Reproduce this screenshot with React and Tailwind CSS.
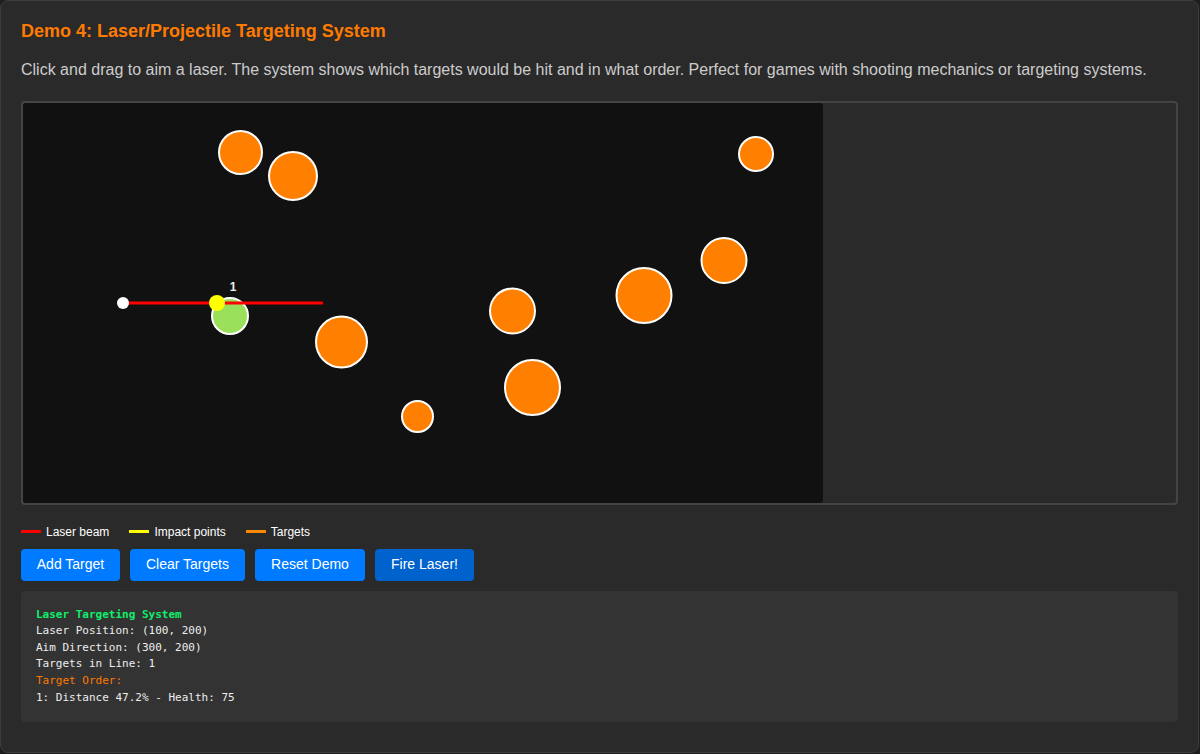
import React from 'react';

const targets = [
  { x: 217.5, y: 49.5, r: 21.5 },
  { x: 270, y: 73, r: 24 },
  { x: 733, y: 51, r: 17 },
  { x: 701, y: 157.5, r: 22.5 },
  { x: 621, y: 192.5, r: 27.5 },
  { x: 489.5, y: 208, r: 22.5 },
  { x: 318.5, y: 239, r: 25.5 },
  { x: 509.5, y: 284.5, r: 27.5 },
  { x: 394.5, y: 313.5, r: 15.5 },
];

const legend = [
  { label: 'Laser beam', color: 'bg-[#ff0000]' },
  { label: 'Impact points', color: 'bg-[#ffff00]' },
  { label: 'Targets', color: 'bg-[#ff8800]' },
];

const App = () => {
  return (
    <div className="min-h-[754px] bg-[#1e1e1e] font-['Liberation_Sans',Arial,sans-serif]">
      <div className="w-[1199px] h-[753px] bg-[#2a2a2a] border border-[#3c3c3c] rounded-lg p-5">
        {/* Header */}
        <h3 className="text-[18px] leading-[21.6px] font-bold text-[#ff7a00]">
          Demo 4: Laser/Projectile Targeting System
        </h3>
        <p className="mt-[15px] mb-[19px] text-[16px] leading-6 text-[#cccccc]">
          Click and drag to aim a laser. The system shows which targets would be hit and in what order. Perfect for games with shooting mechanics or targeting systems.
        </p>

        {/* Canvas */}
        <div className="border-2 border-[#444] rounded-[4px] bg-[#2a2a2a]">
          <svg width="800" height="400" className="block bg-[#111111] rounded-[3px]">
            {targets.map((t, i) => (
              <circle key={i} cx={t.x} cy={t.y} r={t.r} fill="#ff8000" stroke="#ffffff" strokeWidth="2" />
            ))}
            <circle cx="207" cy="213" r="18" fill="#9be05a" stroke="#ffffff" strokeWidth="2" />
            <line x1="100" y1="200" x2="300" y2="200" stroke="#ff0000" strokeWidth="3" />
            <circle cx="100" cy="200" r="6" fill="#ffffff" />
            <circle cx="194" cy="200" r="8" fill="#ffff00" />
            <text x="210" y="188" textAnchor="middle" fill="#eeeeee" fontSize="12" fontWeight="bold" fontFamily="Liberation Sans, Arial, sans-serif">1</text>
          </svg>
        </div>

        {/* Legend */}
        <div className="mt-[19px] flex items-center gap-5 text-[12px] leading-4 text-white">
          {legend.map((l) => (
            <div key={l.label} className="flex items-center gap-[5px]">
              <span className={`w-5 h-[3px] ${l.color}`}></span>
              <span>{l.label}</span>
            </div>
          ))}
        </div>

        {/* Buttons */}
        <div className="mt-[9px] flex gap-[10px]">
          <button className="h-8 w-[99px] rounded-[4px] bg-[#007bff] text-white text-[14px]">Add Target</button>
          <button className="h-8 w-[115px] rounded-[4px] bg-[#007bff] text-white text-[14px]">Clear Targets</button>
          <button className="h-8 w-[110px] rounded-[4px] bg-[#007bff] text-white text-[14px]">Reset Demo</button>
          <button className="h-8 w-[99px] rounded-[4px] bg-[#0062cc] text-white text-[14px]">Fire Laser!</button>
        </div>

        {/* Info panel */}
        <div className="mt-[10px] bg-[#333333] rounded-[4px] px-[15px] pt-[16px] pb-[16px] font-['DejaVu_Sans_Mono','Liberation_Mono',monospace] text-[11px] leading-[16.6px] text-[#eeeeee]">
          <div className="font-bold text-[#10ef6a]">Laser Targeting System</div>
          <div>Laser Position: (100, 200)</div>
          <div>Aim Direction: (300, 200)</div>
          <div>Targets in Line: 1</div>
          <div className="text-[#ff7a00]">Target Order:</div>
          <div>1: Distance 47.2% - Health: 75</div>
        </div>
      </div>
    </div>
  );
};

export default App;
